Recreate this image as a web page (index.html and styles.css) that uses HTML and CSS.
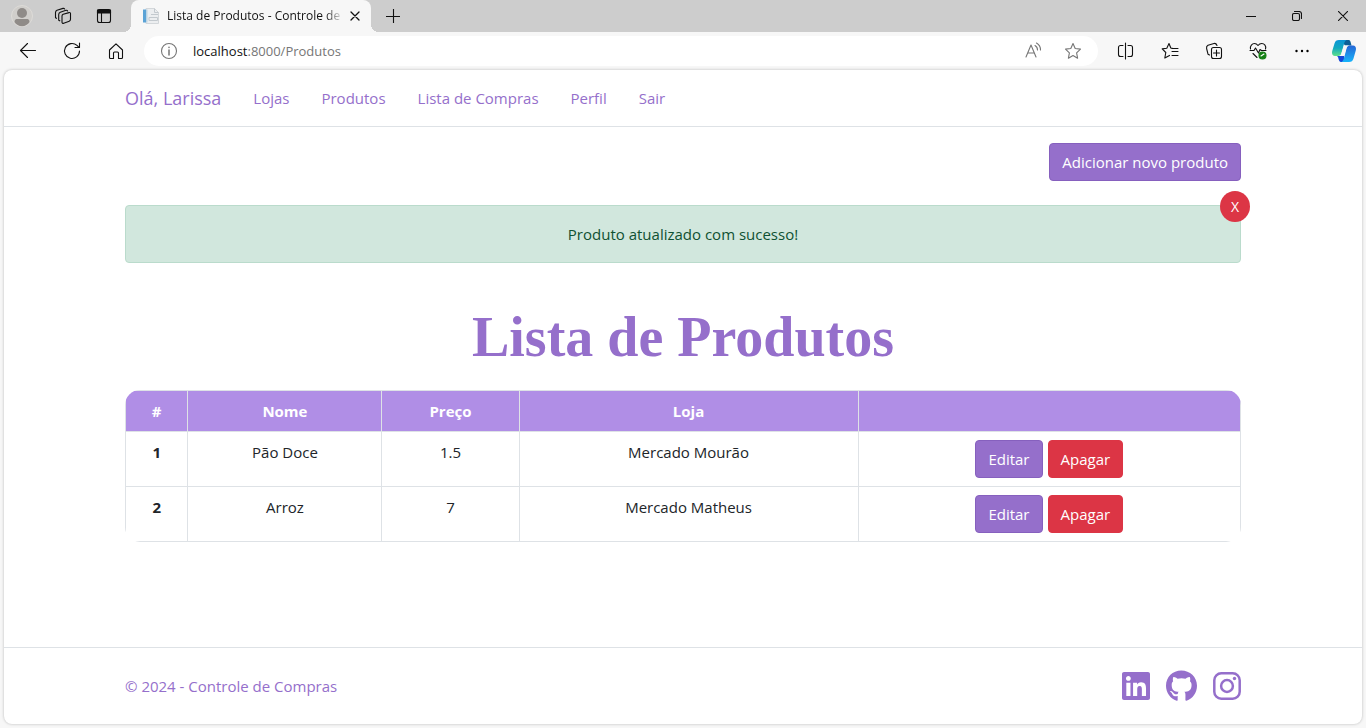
FILE: index.html
```html
<!DOCTYPE html>
<html lang="pt-BR">
<head>
<meta charset="utf-8">
<meta name="viewport" content="width=device-width, initial-scale=1">
<title>Lista de Produtos - Controle de Compras</title>
<link rel="stylesheet" href="styles.css">
</head>
<body>
<div class="browser">
  <div class="tabstrip">
    <div class="strip-tools">
      <button class="strip-btn" type="button" aria-label="Perfil do navegador">
        <svg width="22" height="22" viewBox="0 0 22 22"><circle cx="11" cy="11" r="10.500" fill="#d0cecb" stroke="#dddbd8"/><circle cx="11" cy="8" r="5" fill="#8f8b88"/><path d="M3.500 17c0-2.500 1.500-3 3-3h9c1.500 0 3 .5 3 3-1.500 2.500-4.500 4.300-7.500 4.300S5 19.500 3.500 17z" fill="#8f8b88"/></svg>
      </button>
      <button class="strip-btn" type="button" aria-label="Workspaces">
        <svg class="line" width="18" height="18" viewBox="0 0 18 18"><path d="M9.200 7.300 15 5.600a1 1 0 0 1 1.500 1v5.700a2 2 0 0 1-1.300 1.900L9.700 16.300a1.200 1.200 0 0 1-1.700-1.100V9a2 2 0 0 1 1.200-1.700z"/><path d="M5.800 13.800 4.700 13.200V7.500a2.500 2.500 0 0 1 1.600-2.300L12 3.300c.8-.2 1.300.1 1.600.7"/><path d="M2.500 11.300 1.500 10.700V5.400A2.500 2.500 0 0 1 3 3.200l6-1.800c.8-.2 1.300 0 1.600.6"/></svg>
      </button>
      <button class="strip-btn" type="button" aria-label="Guias verticais">
        <svg class="line" width="16" height="16" viewBox="0 0 16 16"><rect x="1.500" y="1.500" width="13" height="13" rx="2"/><path d="M1.500 2h13v3h-13z" fill="#111"/><path d="M5.500 5v9"/></svg>
      </button>
    </div>
    <div class="tab">
      <svg class="favicon" width="16" height="16" viewBox="0 0 16 16"><path d="M3 .5h8.500l4 4v11H3z" fill="#eceef0" stroke="#d3d7da"/><path d="M0 1.500h3v13H0z" fill="#5ba3d6"/><path d="M3 1.500h1.500v13H3z" fill="#b9d3e4"/><path d="M11.500.5v4h4M8 6.500h7M6 9.500h8.500v3H6z" fill="none" stroke="#c3c9ce"/></svg>
      <span class="tab-title">Lista de Produtos - Controle de Compras</span>
      <button class="tab-close" type="button" aria-label="Fechar guia">
        <svg class="line" width="10" height="10" viewBox="0 0 10 10"><path d="m1 1 8 8M9 1 1 9" stroke-width="1.300"/></svg>
      </button>
    </div>
    <button class="new-tab" type="button" aria-label="Nova guia">
      <svg class="line" width="14" height="14" viewBox="0 0 14 14"><path d="M7.500 0v14M0 7.500h14"/></svg>
    </button>
    <div class="window-controls">
      <button class="win-btn" type="button" aria-label="Minimizar"><svg class="line" width="10" height="10" viewBox="0 0 10 10"><path d="M0 5.500h10"/></svg></button>
      <button class="win-btn" type="button" aria-label="Restaurar"><svg class="line" width="10" height="10" viewBox="0 0 10 10"><rect x=".5" y="2.500" width="7" height="7" rx="1.500"/><path d="M2.500.5H7a2.500 2.500 0 0 1 2.500 2.500v4.500"/></svg></button>
      <button class="win-btn" type="button" aria-label="Fechar"><svg class="line" width="10" height="10" viewBox="0 0 10 10"><path d="m0 0 10 10M10 0 0 10"/></svg></button>
    </div>
  </div>

  <div class="toolbar">
    <button class="tool" type="button" aria-label="Voltar"><svg class="line" width="18" height="18" viewBox="0 0 18 18"><path d="M16.500 8.500H1.500M8.500 1.500l-7 7 7 7"/></svg></button>
    <button class="tool" type="button" aria-label="Atualizar"><svg class="line" width="18" height="18" viewBox="0 0 18 18"><path d="M16.500 9A7.500 7.500 0 1 1 14 3.400l2 2M16.500 1v4.500H12"/></svg></button>
    <button class="tool" type="button" aria-label="Início"><svg class="line" width="18" height="18" viewBox="0 0 18 18"><path d="M2.500 8 9 1.800 15.500 8v7.500a1 1 0 0 1-1 1h-3V11a1 1 0 0 0-1-1h-3a1 1 0 0 0-1 1v5.500h-3a1 1 0 0 1-1-1z"/></svg></button>
    <div class="address">
      <svg class="line soft" width="18" height="18" viewBox="0 0 18 18"><circle cx="9" cy="9" r="7.500"/><path d="M9 8v5M9 5.200v.3" stroke-width="1.500"/></svg>
      <span class="url"><span class="host">localhost</span>:8000/Produtos</span>
      <svg class="line soft" width="18" height="18" viewBox="0 0 18 18"><path d="m2 15 5-12 5 12M4 11h6M11 3.500a5 5 0 0 1 2.500 4.500M12.500 1a8 8 0 0 1 4 7"/></svg>
      <svg class="line soft star" width="18" height="18" viewBox="0 0 18 18"><path d="m9 1.500 2.200 5 5.300.6-3.900 3.700 1 5.400L9 13.500l-4.600 2.700 1-5.400-3.900-3.700 5.300-.6z"/></svg>
    </div>
    <button class="tool" type="button" aria-label="Dividir tela"><svg class="line" width="18" height="18" viewBox="0 0 18 18"><path d="M8.500 1v16M6 3.500H3.500a2 2 0 0 0-2 2v7a2 2 0 0 0 2 2H6M11 3.500h2.500a2 2 0 0 1 2 2v7a2 2 0 0 1-2 2H11"/></svg></button>
    <button class="tool" type="button" aria-label="Favoritos"><svg class="line" width="18" height="18" viewBox="0 0 18 18"><path d="M12 6.500 9.800 6 8 1.500 5.800 6.300l-4.600.6 3.600 3.600-1 5.500 4.700-2.600M11 6.500h6M11 9.500h6M11 13.500h6"/></svg></button>
    <button class="tool" type="button" aria-label="Coleções"><svg class="line" width="18" height="18" viewBox="0 0 18 18"><rect x="6.500" y="5.500" width="10" height="11" rx="2"/><path d="M11.500 8v6M8.500 11h6M4.500 13 3 12.200 1.600 6.500A3 3 0 0 1 3 3.300l6-1.800c1.700-.4 2.500.7 3 2"/></svg></button>
    <button class="tool" type="button" aria-label="Desempenho"><svg class="line" width="18" height="18" viewBox="0 0 18 18"><path d="M1.500 7C.8 3.800 3.200 1.500 5.500 1.500 7.300 1.500 8.300 2.600 9 3.500c.8-1 2-2 3.700-2 2.600 0 4.800 2.300 3.800 5.500M1 8.500h4L6.500 6l3 5L11 7.500l1.500 1H17M4 11.500 8 15.500"/><circle cx="13.500" cy="13.500" r="3.500" fill="#148014" stroke="#148014"/><path d="m12 14 3-2" stroke="#fff"/></svg></button>
    <button class="tool" type="button" aria-label="Mais"><svg width="18" height="18" viewBox="0 0 18 18"><circle cx="3.500" cy="9" r="1.200"/><circle cx="9" cy="9" r="1.200"/><circle cx="14.500" cy="9" r="1.200"/></svg></button>
    <button class="tool copilot" type="button" aria-label="Copilot">
      <svg width="24" height="24" viewBox="0 0 24 24"><defs><linearGradient id="cpl" x1="0" y1="0" x2="0" y2="1"><stop offset="0" stop-color="#0b94d6"/><stop offset=".5" stop-color="#12a8bf"/><stop offset="1" stop-color="#5fe08a"/></linearGradient><linearGradient id="cpr" x1="0" y1="0" x2="0" y2="1"><stop offset="0" stop-color="#2566d6"/><stop offset="1" stop-color="#17b4fa"/></linearGradient></defs><path d="M12 1h4.500c1.500 0 2 1 3 5.500H13L11 4z" fill="#0c5f96"/><path d="M5 17h7l1 6H9.500C7.500 23 7 22 6 18z" fill="#1547d8"/><path d="M7 1h7.500c-1.500.7-2 2-2.800 5L9.500 14c-.6 2.200-1.500 3-3.500 3H3c-2.700 0-3.500-2.300-2.700-5.200L2.500 4.500C3.200 2 4.500 1 7 1z" fill="url(#cpl)"/><path d="M17 23H9.500c1.500-.7 2-2 2.800-5l2.200-8.500c.6-2.200 1.500-3 3.500-3h3c2.700 0 3.500 2.300 2.700 5.200l-2.200 7.800C20.800 22 19.500 23 17 23z" fill="url(#cpr)"/><path d="M12 6.500h5c-1.500.4-2.200 1.300-2.700 3L12.700 15c-.4 1.500-1.200 2-2.700 2H7.500c1.200-.5 1.600-1.500 2-3z" fill="#f7f7f7"/></svg>
    </button>
  </div>

  <div class="page">
    <header class="site-header">
      <nav class="container nav">
        <a class="brand" href="#">Olá, Larissa</a>
        <a href="#">Lojas</a>
        <a href="#">Produtos</a>
        <a href="#">Lista de Compras</a>
        <a href="#">Perfil</a>
        <a href="#">Sair</a>
      </nav>
    </header>

    <main class="container main">
      <div class="actions"><a class="btn btn-primary" href="#">Adicionar novo produto</a></div>
      <div class="alert" role="alert">
        Produto atualizado com sucesso!
        <button class="alert-close" type="button" aria-label="Fechar aviso">X</button>
      </div>
      <h1 class="title">Lista de Produtos</h1>
      <div class="table-wrap">
        <table class="table">
          <colgroup><col class="col-id"><col class="col-name"><col class="col-price"><col class="col-store"><col></colgroup>
          <thead>
            <tr><th scope="col">#</th><th scope="col">Nome</th><th scope="col">Preço</th><th scope="col">Loja</th><th scope="col" aria-label="Ações"></th></tr>
          </thead>
          <tbody>
            <tr><th scope="row">1</th><td>Pão Doce</td><td>1.5</td><td>Mercado Mourão</td>
              <td><div class="row-actions"><a class="btn btn-primary" href="#">Editar</a><button class="btn btn-danger" type="button">Apagar</button></div></td></tr>
            <tr><th scope="row">2</th><td>Arroz</td><td>7</td><td>Mercado Matheus</td>
              <td><div class="row-actions"><a class="btn btn-primary" href="#">Editar</a><button class="btn btn-danger" type="button">Apagar</button></div></td></tr>
          </tbody>
        </table>
      </div>
    </main>

    <footer class="site-footer">
      <div class="container footer-row">
        <span>© 2024 - Controle de Compras</span>
        <div class="social">
          <a href="#" aria-label="LinkedIn"><svg width="28" height="32" viewBox="0 0 448 512"><path d="M416 32H31.900C14.300 32 0 46.500 0 64.300v383.400C0 465.500 14.300 480 31.900 480H416c17.600 0 32-14.500 32-32.300V64.300c0-17.800-14.400-32.300-32-32.300zM135.400 416H69V202.200h66.500V416zm-33.200-243c-21.300 0-38.500-17.300-38.500-38.500S80.900 96 102.200 96c21.200 0 38.500 17.300 38.500 38.500 0 21.300-17.200 38.500-38.500 38.500zm282.100 243h-66.400V312c0-24.800-.5-56.700-34.500-56.700-34.600 0-39.900 27-39.900 54.900V416h-66.400V202.200h63.700v29.200h.9c8.900-16.800 30.600-34.500 62.900-34.500 67.200 0 79.700 44.300 79.700 101.900V416z"/></svg></a>
          <a href="#" aria-label="GitHub"><svg width="31" height="32" viewBox="0 0 496 512"><path d="M244.800 8C106.100 8 0 113.300 0 252c0 110.900 69.800 205.800 169.500 239.200 12.800 2.300 17.300-5.600 17.300-12.100 0-6.200-.3-40.400-.3-61.400 0 0-70 15-84.700-29.800 0 0-11.400-29.100-27.800-36.600 0 0-22.900-15.700 1.600-15.400 0 0 24.900 2 38.600 25.800 21.900 38.600 58.600 27.500 72.900 20.900 2.300-16 8.800-27.100 16-33.700-55.900-6.200-112.300-14.300-112.300-110.500 0-27.500 7.600-41.300 23.600-58.900-2.600-6.500-11.100-33.300 2.600-67.900 20.900-6.500 69 27 69 27 20-5.600 41.500-8.500 62.800-8.500s42.800 2.900 62.800 8.500c0 0 48.100-33.600 69-27 13.700 34.700 5.200 61.400 2.600 67.900 16 17.700 25.800 31.500 25.800 58.900 0 96.500-58.900 104.200-114.800 110.500 9.200 7.900 17 22.900 17 46.400 0 33.700-.3 75.400-.3 83.600 0 6.500 4.600 14.400 17.300 12.100C428.200 457.800 496 362.900 496 252 496 113.300 383.500 8 244.800 8z"/></svg></a>
          <a href="#" aria-label="Instagram"><svg width="28" height="32" viewBox="0 0 28 32"><rect x="1.300" y="3.300" width="25.400" height="25.400" rx="7" fill="none" stroke="#956fcb" stroke-width="2.500"/><circle cx="14" cy="16" r="5.900" fill="none" stroke="#956fcb" stroke-width="2.500"/><circle cx="21.500" cy="8.500" r="1.700"/></svg></a>
        </div>
      </div>
    </footer>
  </div>
</div>
</body>
</html>
```
FILE: styles.css
```css
* { box-sizing: border-box; }

body {
  margin: 0;
  background: #f7f7f7;
  color: #212529;
  font: 15px/24px "Segoe UI", "Open Sans", "Noto Sans", sans-serif;
}

a { color: #956fcb; text-decoration: none; }
button { font: inherit; cursor: pointer; }
svg { display: block; flex: none; }

.line { fill: none; stroke: #111; stroke-width: 1.1; stroke-linecap: round; stroke-linejoin: round; }
.soft { stroke: #767676; }

.browser {
  display: flex;
  flex-direction: column;
  min-height: 100vh;
}

/* Tab strip */
.tabstrip {
  display: flex;
  height: 32px;
  background: #cdcdcd;
}
.strip-tools { display: flex; padding: 0 7px 0 1px; }
.strip-btn, .tab-close, .new-tab, .win-btn, .tool {
  display: flex;
  align-items: center;
  justify-content: center;
  padding: 0;
  border: 0;
  background: none;
}
.strip-btn { width: 41px; }
.tab {
  position: relative;
  display: flex;
  align-items: center;
  width: 240px;
  padding: 0 8px 0 12px;
  border-radius: 8px 8px 0 0;
  background: #f7f7f7;
}
/* Flared feet of the active tab */
.tab::before, .tab::after {
  content: "";
  position: absolute;
  bottom: 0;
  width: 8px;
  height: 8px;
}
.tab::before { right: 100%; background: radial-gradient(circle at 0 0, transparent 8px, #f7f7f7 8px); }
.tab::after { left: 100%; background: radial-gradient(circle at 100% 0, transparent 8px, #f7f7f7 8px); }
.tab-title {
  flex: 1;
  min-width: 0;
  margin-left: 8px;
  overflow: hidden;
  white-space: nowrap;
  color: #111;
  font-size: 12px;
  line-height: 16px;
  mask-image: linear-gradient(90deg, #000 90%, transparent);
}
.tab-close { width: 16px; height: 16px; margin-left: 4px; }
.new-tab { width: 44px; }
.window-controls { display: flex; margin-left: auto; }
.win-btn { width: 46px; }

/* Toolbar */
.toolbar {
  display: flex;
  align-items: center;
  gap: 12px;
  height: 38px;
  padding: 0 8px 0 12px;
}
.tool { width: 32px; height: 32px; }
.copilot { width: 28px; }
.address {
  display: flex;
  flex: 1;
  align-items: center;
  height: 30px;
  padding: 0 16px;
  border-radius: 15px;
  background: #fff;
}
.url {
  flex: 1;
  margin-left: 15px;
  color: #767676;
  font-size: 13px;
}
.host { color: #111; }
.star { margin-left: 22px; }

/* Page */
.page {
  display: flex;
  flex: 1;
  flex-direction: column;
  margin: 0 4px 4px;
  border-radius: 8px;
  background: #fff;
  box-shadow: 0 0 3px rgba(0, 0, 0, 0.25);
}
.container {
  width: 100%;
  max-width: 1140px;
  margin: 0 auto;
  padding: 0 12px;
}
.site-header { border-bottom: 1px solid #dee2e6; }
.nav {
  display: flex;
  align-items: center;
  gap: 32px;
  height: 56px;
}
.brand { font-size: 18px; }

.main { flex: 1; padding-top: 16px; }
.actions { display: flex; justify-content: flex-end; }
.btn {
  display: inline-block;
  padding: 6px 12px;
  border: 1px solid transparent;
  border-radius: 4px;
  color: #fff;
  line-height: 24px;
}
.btn-primary { border-color: #8660be; background: #956fcb; }
.btn-danger { background: #dc3545; border-color: #dc3545; }

.alert {
  position: relative;
  margin-top: 24px;
  padding: 16px;
  border: 1px solid #badbcc;
  border-radius: 4px;
  background: #d1e7dd;
  color: #0f5132;
  text-align: center;
}
.alert-close {
  position: absolute;
  top: -15px;
  right: -10px;
  width: 30px;
  height: 31px;
  padding: 0;
  border: 0;
  border-radius: 50%;
  background: #dc3545;
  color: #fff;
  font-size: 14px;
}

.title {
  margin: 41px 0 19px;
  color: #956fcb;
  font: bold 56px/67px "Liberation Serif", "Times New Roman", serif;
  text-align: center;
}

.table-wrap { overflow: hidden; border-radius: 15px; }
.table {
  width: 100%;
  border-collapse: collapse;
  table-layout: fixed;
  text-align: center;
}
.table th, .table td {
  padding: 8px;
  border: 1px solid #dee2e6;
  vertical-align: top;
}
.table thead th { background: #b08ee6; color: #fff; }
.col-id { width: 5.6%; }
.col-name { width: 17.4%; }
.col-price { width: 12.3%; }
.col-store { width: 30.4%; }
.row-actions { display: flex; justify-content: center; gap: 5px; }

.site-footer { border-top: 1px solid #dee2e6; }
.footer-row {
  display: flex;
  align-items: center;
  justify-content: space-between;
  height: 76px;
  color: #956fcb;
}
.social { display: flex; gap: 16px; fill: #956fcb; }
```
